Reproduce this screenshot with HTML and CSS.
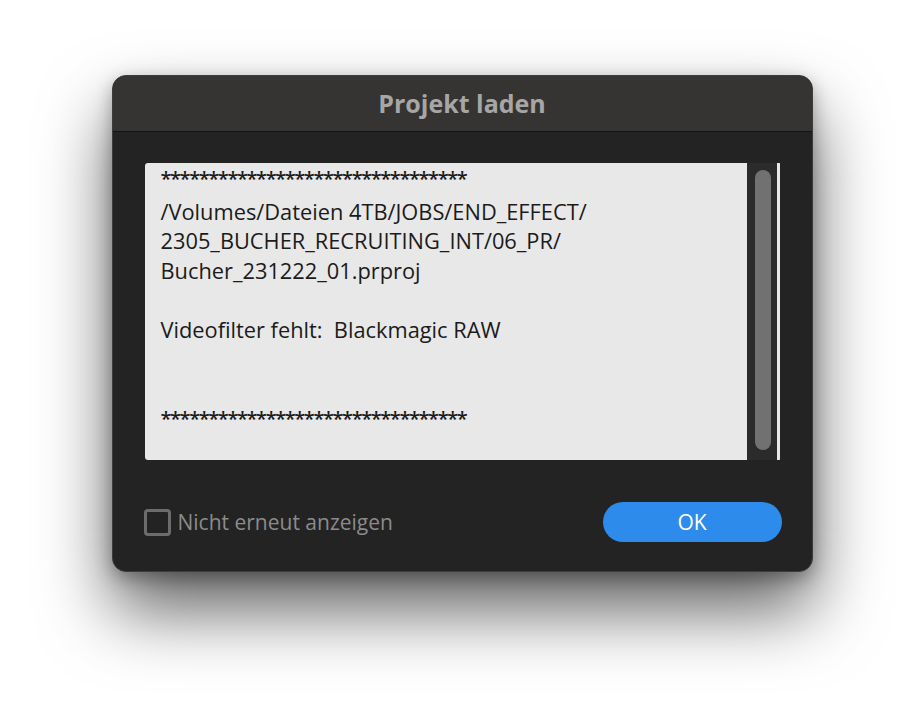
FILE: index.html
```html
<!DOCTYPE html>
<html lang="de">
<head>
<meta charset="utf-8">
<title>Projekt laden</title>
<link rel="stylesheet" href="styles.css">
</head>
<body>
<div class="stage">
  <div class="dialog">
    <div class="titlebar">Projekt laden</div>
    <div class="body">
      <div class="msgbox">
        <div class="msg">
          <div class="line stars first">********************************</div>
          <div class="line">/Volumes/Dateien 4TB/JOBS/END_EFFECT/</div>
          <div class="line">2305_BUCHER_RECRUITING_INT/06_PR/</div>
          <div class="line">Bucher_231222_01.prproj</div>
          <div class="line">&nbsp;</div>
          <div class="line">Videofilter fehlt:  Blackmagic RAW</div>
          <div class="line">&nbsp;</div>
          <div class="line">&nbsp;</div>
          <div class="line stars">********************************</div>
        </div>
        <div class="track"><div class="thumb"></div></div>
        <div class="strip"></div>
      </div>
      <div class="footer">
        <label class="check"><span class="box"></span><span class="label">Nicht erneut anzeigen</span></label>
        <button class="ok">OK</button>
      </div>
    </div>
  </div>
</div>
</body>
</html>
```
FILE: styles.css
```css
html, body {
  margin: 0;
  padding: 0;
  background: #ffffff;
}
.stage {
  display: flex;
  justify-content: center;
  align-items: flex-start;
  padding-top: 75px;
  min-height: 720px;
  box-sizing: border-box;
}
.dialog {
  width: 701px;
  box-sizing: border-box;
  border: 1px solid #3c3c3c;
  border-radius: 14px;
  overflow: hidden;
  background: #232323;
  box-shadow: 0 38px 70px rgba(0, 0, 0, 0.62), 0 6px 18px rgba(0, 0, 0, 0.3);
  font-family: "Open Sans", "Liberation Sans", sans-serif;
}
.titlebar {
  height: 56px;
  background: #363432;
  border-bottom: 1px solid #141414;
  display: flex;
  align-items: center;
  justify-content: center;
  color: #a6a6a6;
  font-weight: 700;
  font-size: 25px;
  padding-bottom: 2px;
  box-sizing: border-box;
}
.body {
  padding: 31px 30px 29px 32px;
}
.msgbox {
  display: flex;
  height: 297px;
  border-radius: 3px;
  overflow: hidden;
}
.msg {
  flex: 1;
  background: #e8e8e8;
  color: #1b1b1b;
  font-size: 21.8px;
  line-height: 29.6px;
  padding: 4px 0 0 16px;
}
.line {
  white-space: pre;
}
.stars {
  font-size: 20px;
  letter-spacing: -1.4px;
  font-weight: 600;
}
.first {
  margin-top: -3px;
  margin-bottom: 3px;
}
.track {
  width: 30px;
  background: #2b2b2b;
  box-sizing: border-box;
  padding: 7px 6px 10px 8px;
  display: flex;
}
.thumb {
  flex: 1;
  background: #717171;
  border-radius: 8px;
}
.strip {
  width: 3px;
  background: #e8e8e8;
  margin-right: 2px;
}
.footer {
  display: flex;
  align-items: center;
  justify-content: space-between;
  margin-top: 42px;
}
.check {
  display: flex;
  align-items: center;
  gap: 7px;
  color: #8b8b8b;
  font-size: 21px;
  margin-left: -1px;
}
.box {
  width: 27px;
  height: 27px;
  box-sizing: border-box;
  border: 3px solid #6c6c6c;
  border-radius: 4px;
}
.ok {
  width: 179px;
  height: 40px;
  border: none;
  border-radius: 20px;
  background: #2d8ceb;
  color: #ffffff;
  font-family: "Open Sans", "Liberation Sans", sans-serif;
  font-size: 21px;
  padding: 0;
}
```
